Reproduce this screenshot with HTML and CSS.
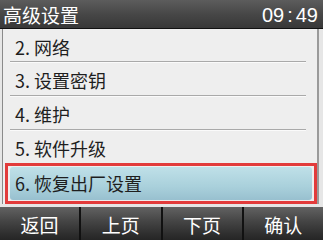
FILE: index.html
```html
<!DOCTYPE html>
<html>
<head>
<meta charset="utf-8">
<link rel="stylesheet" href="styles.css">
</head>
<body>
<div class="screen">
  <header class="bar">
    <span class="title">高级设置</span>
    <span class="time">09<span class="colon">:</span>49</span>
  </header>
  <main class="list">
    <div class="row">2. 网络</div>
    <div class="row">3. 设置密钥</div>
    <div class="row">4. 维护</div>
    <div class="row">5. 软件升级</div>
    <div class="selected"><div class="sel-inner">6. 恢复出厂设置</div></div>
  </main>
  <footer class="keys">
    <div class="key">返回</div>
    <div class="key">上页</div>
    <div class="key">下页</div>
    <div class="key">确认</div>
  </footer>
</div>
</body>
</html>
```
FILE: styles.css
```css
html, body {
  margin: 0;
  padding: 0;
}
body {
  width: 323px;
  height: 240px;
  overflow: hidden;
  font-family: "Noto Sans CJK SC", "Liberation Sans", sans-serif;
}
.screen {
  display: flex;
  flex-direction: column;
  width: 323px;
  height: 240px;
  background: #e6e6e6;
}
.bar {
  height: 28px;
  flex: none;
  display: flex;
  align-items: center;
  justify-content: space-between;
  padding: 0 5px 0 3px;
  background: linear-gradient(#5c5c5c, #474747 50%, #383838);
  border-bottom: 1px solid #111;
  color: #fff;
}
.title {
  font-size: 19px;
  line-height: 28px;
  margin-top: 1px;
}
.time {
  font-family: "Liberation Sans", sans-serif;
  font-size: 20px;
  line-height: 28px;
  margin-top: 2px;
}
.colon {
  margin: 0 3px;
}
.list {
  flex: 1;
  display: flex;
  flex-direction: column;
  margin: 0 4px 0 2px;
  border-left: 1px solid #8a8a8a;
  border-right: 2px solid #9a9a9a;
  background: #eeeeee;
}
.row {
  height: 33px;
  flex: none;
  box-sizing: border-box;
  margin: 0 11px 0 7px;
  padding: 3px 0 0 5px;
  font-size: 18px;
  line-height: 30px;
  color: #1e1e1e;
  border-bottom: 1px solid #a9a9a9;
  box-shadow: 0 1px 0 #fafafa;
}
.row + .row {
  height: 34px;
}
.row:nth-child(4) {
  border-bottom: none;
  box-shadow: none;
  height: 33px;
}
.selected {
  flex: none;
  height: 41px;
  box-sizing: border-box;
  margin: 0 0 0 2px;
  border: 3px solid #e23b3b;
  padding: 1px 2px;
}
.sel-inner {
  height: 100%;
  border-radius: 3px;
  background: linear-gradient(#bfe0e8, #a9d0db 60%, #98c0cf);
  font-size: 18px;
  line-height: 33px;
  padding: 0 0 0 5px;
  color: #1e1e1e;
}
.keys {
  flex: none;
  height: 34px;
  margin-top: 3px;
  display: grid;
  grid-template-columns: repeat(4, 1fr);
  gap: 2px;
  background: #111;
}
.key {
  display: flex;
  align-items: center;
  justify-content: center;
  background: linear-gradient(#626262, #464646 40%, #2e2e2e 80%, #242424);
  color: #fff;
  font-size: 19px;
  padding-top: 1px;
}
```
